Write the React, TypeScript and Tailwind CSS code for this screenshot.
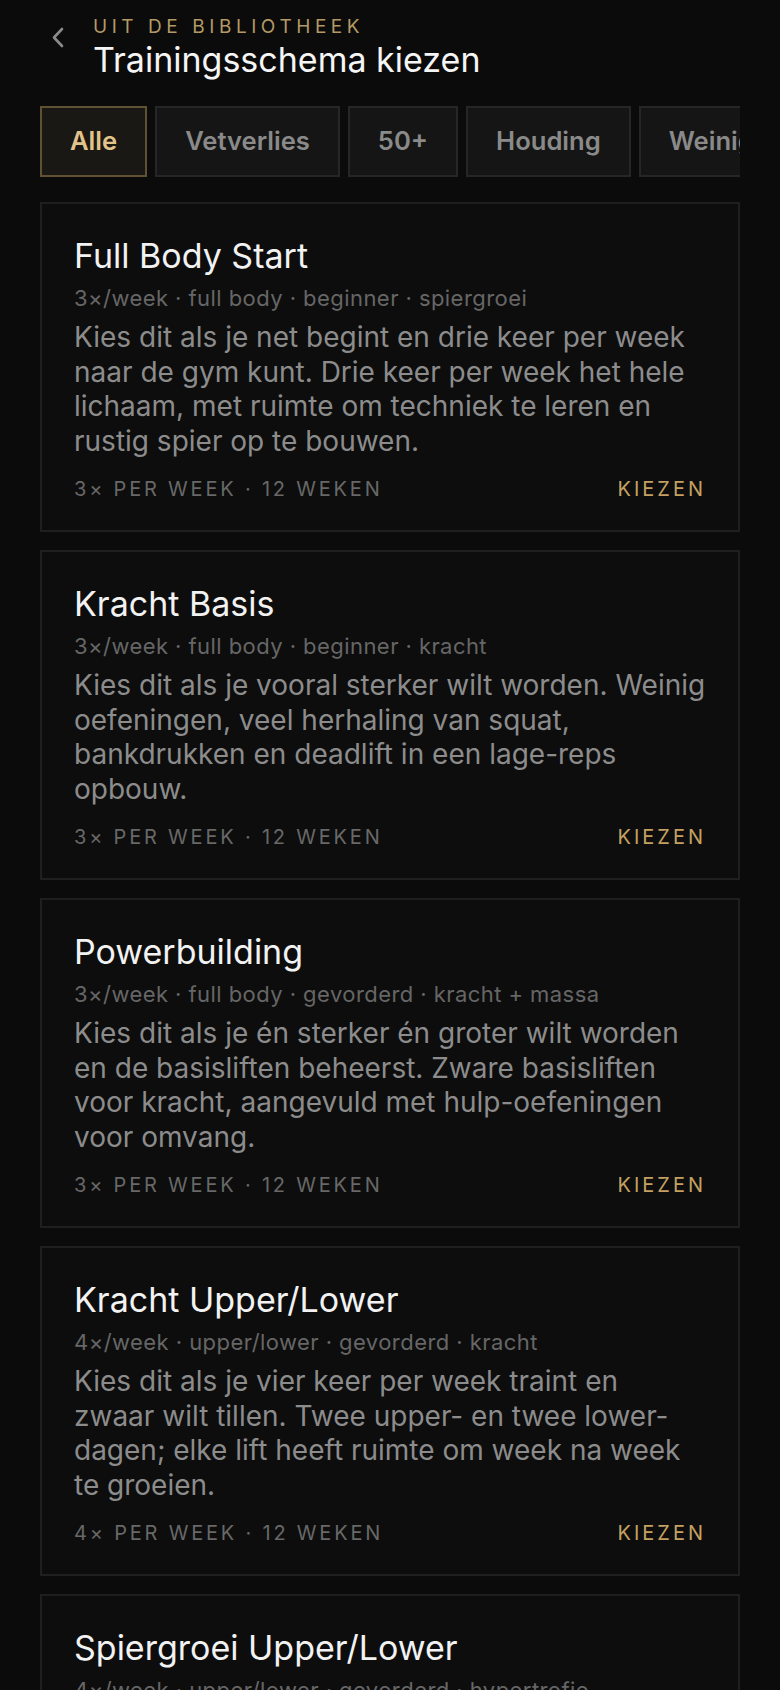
import React, { useState } from 'react';

type Schema = {
  id: string;
  name: string;
  meta: string;
  description: string;
  footer: string;
};

const FILTERS = ['Alle', 'Vetverlies', '50+', 'Houding', 'Weinig tijd'];

const SCHEMAS: Schema[] = [
  {
    id: 'full-body-start',
    name: 'Full Body Start',
    meta: '3×/week · full body · beginner · spiergroei',
    description:
      'Kies dit als je net begint en drie keer per week naar de gym kunt. Drie keer per week het hele lichaam, met ruimte om techniek te leren en rustig spier op te bouwen.',
    footer: '3× per week · 12 weken',
  },
  {
    id: 'kracht-basis',
    name: 'Kracht Basis',
    meta: '3×/week · full body · beginner · kracht',
    description:
      'Kies dit als je vooral sterker wilt worden. Weinig oefeningen, veel herhaling van squat, bankdrukken en deadlift in een lage-reps opbouw.',
    footer: '3× per week · 12 weken',
  },
  {
    id: 'powerbuilding',
    name: 'Powerbuilding',
    meta: '3×/week · full body · gevorderd · kracht + massa',
    description:
      'Kies dit als je én sterker én groter wilt worden en de basisliften beheerst. Zware basisliften voor kracht, aangevuld met hulp-oefeningen voor omvang.',
    footer: '3× per week · 12 weken',
  },
  {
    id: 'kracht-upper-lower',
    name: 'Kracht Upper/Lower',
    meta: '4×/week · upper/lower · gevorderd · kracht',
    description:
      'Kies dit als je vier keer per week traint en zwaar wilt tillen. Twee upper- en twee lower-dagen; elke lift heeft ruimte om week na week te groeien.',
    footer: '4× per week · 12 weken',
  },
  {
    id: 'spiergroei-upper-lower',
    name: 'Spiergroei Upper/Lower',
    meta: '4×/week · upper/lower · gevorderd · hypertrofie',
    description:
      'Kies dit als je vier keer per week traint en vooral spiermassa wilt opbouwen. Meer volume per spiergroep, met gematigde gewichten en genoeg herhalingen.',
    footer: '4× per week · 12 weken',
  },
];

const font = { fontFamily: 'Inter, "Noto Sans", sans-serif' };

const SchemaCard: React.FC<{ schema: Schema }> = ({ schema }) => (
  <div className="border-2 border-[#1f1f1f] bg-[#0d0d0d] px-8 pt-8 pb-[27px]">
    <div className="text-[34px] leading-[40px] text-[#f2f2f2]">{schema.name}</div>
    <div className="mt-2 text-[22px] leading-[28px] tracking-[0.02em] text-[#666666]">
      {schema.meta}
    </div>
    <p className="mt-2 text-[28px] leading-[34.5px] text-[#8c8c8c]">{schema.description}</p>
    <div className="mt-[17px] flex items-center justify-between">
      <span className="text-[20px] leading-[28px] uppercase tracking-[0.14em] text-[#686868]">
        {schema.footer}
      </span>
      <button className="text-[20px] leading-[28px] uppercase tracking-[0.15em] text-[#c4a062]">
        Kiezen
      </button>
    </div>
  </div>
);

export default function App() {
  const [active, setActive] = useState('Alle');

  return (
    <div className="min-h-screen bg-[#0b0b0b]" style={font}>
      {/* Header */}
      <div className="flex pt-[15px]">
        <button className="w-[93px] shrink-0 pl-[51px] pt-[12px] self-start">
          <svg width="13" height="21" viewBox="0 0 13 21" fill="none">
            <path
              d="M11 2 L3 10.5 L11 19"
              stroke="#8a8a8a"
              strokeWidth="2.6"
              strokeLinecap="round"
              strokeLinejoin="round"
            />
          </svg>
        </button>
        <div>
          <div className="text-[19px] leading-[24px] uppercase tracking-[0.24em] text-[#b39a64]">
            Uit de bibliotheek
          </div>
          <h1 className="mt-[1px] text-[34px] leading-[40px] text-[#f5f5f5]">
            Trainingsschema kiezen
          </h1>
        </div>
      </div>

      {/* Filters */}
      <div className="mt-[26px] px-10">
        <div className="flex gap-[8px] overflow-hidden">
          {FILTERS.map((f) => {
            const on = f === active;
            return (
              <button
                key={f}
                onClick={() => setActive(f)}
                className={`h-[71px] shrink-0 whitespace-nowrap border-2 px-[28px] text-[25.6px] font-semibold ${
                  on
                    ? 'border-[#5f5132] bg-[#1a1814] text-[#e2c48a]'
                    : 'border-[#262626] bg-[#151515] text-[#8a8a8a]'
                }`}
              >
                {f}
              </button>
            );
          })}
        </div>
      </div>

      {/* Schema list */}
      <div className="mt-[25px] flex flex-col gap-[18px] px-10 pb-10">
        {SCHEMAS.map((s) => (
          <SchemaCard key={s.id} schema={s} />
        ))}
      </div>
    </div>
  );
}
